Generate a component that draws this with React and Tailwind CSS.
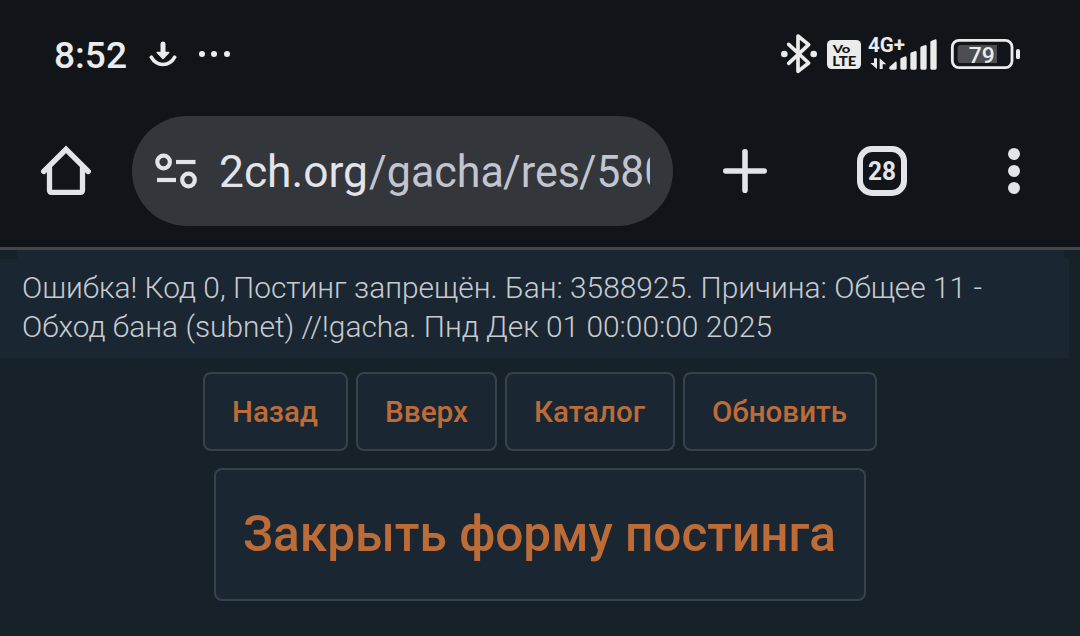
import React from 'react'

const navButtons = [
  { label: 'Назад', width: 'w-[145px]', text: 86 },
  { label: 'Вверх', width: 'w-[141px]', text: 83 },
  { label: 'Каталог', width: 'w-[170px]', text: 111 },
  { label: 'Обновить', width: 'w-[194px]', text: 135 },
]

// One line of text kept at a known width
function Line({ width, height, size, children, className, weight = 400 }) {
  return (
    <svg width={width} height={height} className={className} overflow="visible" fill="currentColor">
      <text x="0" y={height} fontSize={size} fontWeight={weight} textLength={width} lengthAdjust="spacingAndGlyphs">
        {children}
      </text>
    </svg>
  )
}

function DownloadIcon() {
  return (
    <svg width="28" height="26" viewBox="0 0 28 26" fill="none" stroke="currentColor" strokeLinecap="round">
      <path d="M14 3v10" strokeWidth="5" />
      <path d="M8.300 11.500h11.400L14 17.500z" fill="currentColor" strokeWidth="1.600" strokeLinejoin="round" />
      <path d="M2.300 16.200c2.800 5 7 7.300 11.700 7.300s8.900-2.300 11.700-7.300" strokeWidth="3.600" />
    </svg>
  )
}

function StatusIcons() {
  return (
    <svg width="260" height="60" viewBox="0 0 780 180" fill="currentColor">
      <g fill="none" stroke="currentColor" strokeWidth="11" strokeLinecap="round" strokeLinejoin="round">
        <path d="M56 58l60 56-32 25V33l32 26-60 56" />
      </g>
      <circle cx="43" cy="87" r="10" />
      <circle cx="131" cy="87" r="10" />

      <rect x="171" y="45" width="102" height="87" rx="14" />
      <g className="fill-[#111419] font-['Lato',sans-serif]" fontWeight="900">
        <text x="188" y="84" fontSize="35" textLength="53" lengthAdjust="spacingAndGlyphs">Vo</text>
        <text x="187" y="122" fontSize="37" textLength="72" lengthAdjust="spacingAndGlyphs">LTE</text>
      </g>

      <text x="294" y="80" fontSize="59" fontWeight="700" textLength="111" lengthAdjust="spacingAndGlyphs">4G+</text>
      <path d="M312 100h9v32l-20-18h11z" />
      <path d="M329 132v-32l20 18h-11v14z" />
      <path d="M358 126l18-16q4-1 4 3v17q0 4-4 4h-14q-4 0-4-4z" />
      <path d="M391 103q0-4 4-5l11-4q4 0 4 4v32q0 4-4 4h-11q-4 0-4-4z" />
      <path d="M421 87q0-4 4-5l11-4q4 0 4 4v48q0 4-4 4h-11q-4 0-4-4z" />
      <path d="M451 69q0-4 4-5l11-4q4 0 4 4v66q0 4-4 4h-11q-4 0-4-4z" />
      <path d="M481 52q0-4 4-5l11-4q4 0 4 4v83q0 4-4 4h-11q-4 0-4-4z" />

      <rect x="547" y="46" width="179" height="82" rx="20" fill="none" stroke="currentColor" strokeWidth="8.500" />
      <rect x="738" y="72" width="12" height="31" rx="6" />
      <path d="M681 60v54H573q-10 0-10-10V70q0-10 10-10z" className="fill-[#4d4e51]" />
      <text x="596" y="113" fontSize="67" fontWeight="500" textLength="78" lengthAdjust="spacingAndGlyphs">79</text>
    </svg>
  )
}

function HomeIcon() {
  return (
    <svg width="52" height="52" viewBox="0 0 52 52" fill="none" stroke="currentColor" strokeWidth="5.300" strokeLinecap="round" strokeLinejoin="round">
      <path d="M3.700 26.500L26 4.300l22.300 22.200" strokeLinejoin="miter" />
      <path d="M9.500 23v22q0 2.300 2.300 2.300h28.400q2.300 0 2.300-2.300V23" />
    </svg>
  )
}

function SiteSettingsIcon() {
  return (
    <svg width="42" height="36" viewBox="0 0 42 36" fill="none" stroke="currentColor" strokeWidth="4.200">
      <circle cx="8.600" cy="9" r="6.300" />
      <path d="M21 9h19.500" />
      <path d="M2 27h19" />
      <circle cx="33.500" cy="27" r="6.300" />
    </svg>
  )
}

export default function App() {
  return (
    <div className="h-[636px] w-[1080px] overflow-hidden bg-[#17212a] font-['Roboto',sans-serif]">
      <header className="h-[250px] border-b-[3px] border-[#44474b] bg-[#111419] text-[#e3e4e9]">
        <div className="flex h-[85px] items-end justify-between pl-[54px] pr-[50px] text-[#ebebeb]">
          <div className="flex h-[60px] items-start">
            <Line width={73} height={43} size={37.5} weight={500}>8:52</Line>
            <div className="ml-[22px] mt-4">
              <DownloadIcon />
            </div>
            <div className="ml-[22px] mt-[26px] flex gap-[6.4px]">
              <span className="size-1.5 rounded-full bg-current" />
              <span className="size-1.5 rounded-full bg-current" />
              <span className="size-1.5 rounded-full bg-current" />
            </div>
          </div>
          <StatusIcons />
        </div>

        <div className="mt-[31px] flex h-[110px] items-center pl-10">
          <HomeIcon />
          <div className="ml-10 flex h-[110px] w-[541px] items-center rounded-[55px] bg-[#33363b] pl-[23px]">
            <SiteSettingsIcon />
            <div className="ml-[22px] h-[64px] w-[431px] overflow-hidden">
              <svg width="452" height="64" overflow="visible" fill="currentColor" fontSize="45">
                <text x="0" y="48" textLength="149" lengthAdjust="spacingAndGlyphs">2ch.org</text>
                <g className="fill-[#c2c5d0]">
                  <text x="150" y="48" textLength="135" lengthAdjust="spacingAndGlyphs">/gacha</text>
                  <text x="284" y="48" textLength="77" lengthAdjust="spacingAndGlyphs">/res</text>
                  <text x="360" y="48" textLength="89" lengthAdjust="spacingAndGlyphs">/580</text>
                </g>
              </svg>
            </div>
          </div>
          <svg width="44" height="44" viewBox="0 0 44 44" className="ml-[50px]" stroke="currentColor" strokeWidth="5.6" strokeLinecap="round">
            <path d="M22 2.800v38.400M2.800 22h38.400" />
          </svg>
          <div className="ml-[90px] flex size-[50px] items-center justify-center rounded-[15px] border-[6px] border-current">
            <Line width={28} height={18} size={25.5} weight={700}>28</Line>
          </div>
          <div className="ml-[101px] flex flex-col gap-[4.6px]">
            <span className="size-3 rounded-full bg-current" />
            <span className="size-3 rounded-full bg-current" />
            <span className="size-3 rounded-full bg-current" />
          </div>
        </div>
      </header>

      <main>
        <div className="ml-[17px] h-[9px] w-[1047px] bg-[#1a2733]" />
        <div className="flex h-[99px] w-[1069px] flex-col bg-[#1a2733] pl-[22px] pt-[18px] text-[#c8cbce]">
          <Line width={960} height={21} size={29.5} weight={300}>
            Ошибка! Код 0, Постинг запрещён. Бан: 3588925. Причина: Общее 11 -
          </Line>
          <Line width={750} height={21} size={29.5} weight={300} className="mt-[18px]">
            Обход бана (subnet) //!gacha. Пнд Дек 01 00:00:00 2025
          </Line>
        </div>

        <nav className="mt-3.5 flex justify-center gap-2 text-[#bd6c37]">
          {navButtons.map(({ label, width, text }) => (
            <button key={label} className={`flex h-[79px] items-center justify-center rounded-lg border-2 border-[#36434b] bg-[#1a2733] pr-px ${width}`}>
              <Line width={text} height={21} size={29.5} weight={500}>{label}</Line>
            </button>
          ))}
        </nav>

        <button className="mx-auto mt-[17px] flex h-[133px] w-[652px] items-center justify-center rounded-lg border-2 border-[#36434b] bg-[#1a2733] pr-px pb-0.5 text-[#bd6c37]">
          <Line width={593} height={34} size={50} weight={500}>Закрыть форму постинга</Line>
        </button>
      </main>
    </div>
  )
}
